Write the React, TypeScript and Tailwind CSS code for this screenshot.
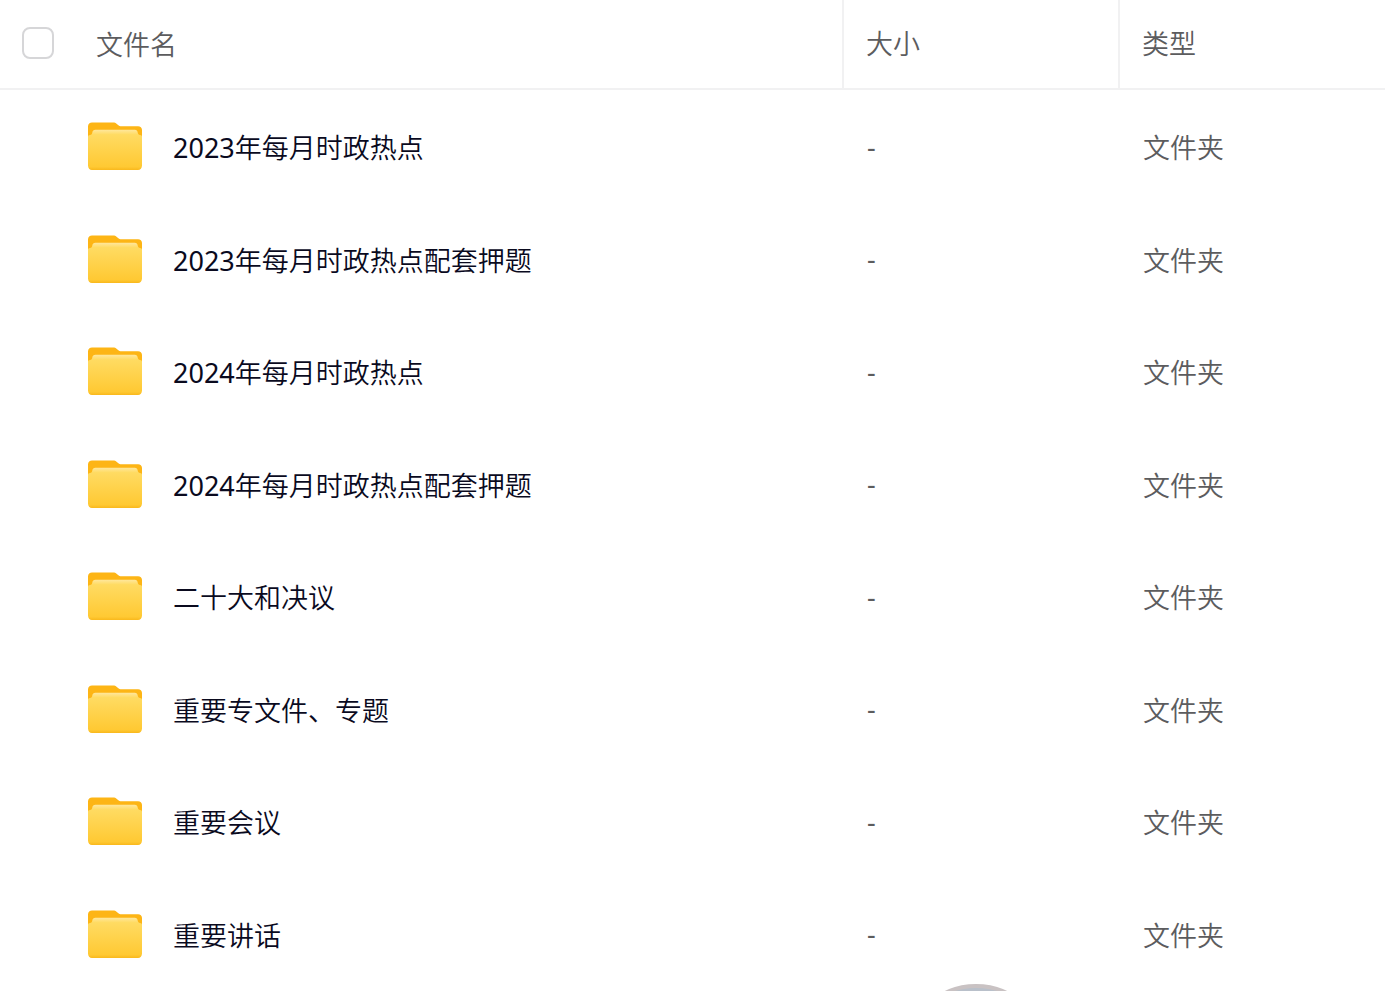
const files = [
  '2023年每月时政热点',
  '2023年每月时政热点配套押题',
  '2024年每月时政热点',
  '2024年每月时政热点配套押题',
  '二十大和决议',
  '重要专文件、专题',
  '重要会议',
  '重要讲话',
];

function FolderGradients() {
  return (
    <svg className="absolute size-0" aria-hidden="true">
      <defs>
        <linearGradient id="folder-front" x1="0" y1="0" x2="0" y2="1">
          <stop offset="0" stopColor="#FFE79C" />
          <stop offset="0.12" stopColor="#FFDB62" />
          <stop offset="0.92" stopColor="#FFC933" />
          <stop offset="1" stopColor="#F9B81C" />
        </linearGradient>
      </defs>
    </svg>
  );
}

function FolderIcon() {
  return (
    <svg className="shrink-0" width="54" height="49" viewBox="0 0 54 49" fill="none" aria-hidden="true">
      <path
        d="M0 4.5C0 2 1.8 0.5 4 0.5H25C26.6 0.5 27.7 1 28.8 1.9L30.4 3.2C31.3 3.9 32 4.2 33.2 4.2H50C52.4 4.2 54 5.8 54 8V30H0Z"
        fill="#FDB515"
      />
      <path
        d="M0 15C0 13.4 0.8 13.2 2 13C3.6 12.7 4 12 4.3 10.4C4.6 8.6 5.6 7.8 7.4 7.8H46.8C48.6 7.8 49.4 8.7 49.7 10.4C50 12 50.6 12.7 52 13C53.2 13.2 54 13.4 54 15V43.5C54 46.1 52.4 48 50 48H4C1.6 48 0 46.1 0 43.5Z"
        fill="url(#folder-front)"
      />
    </svg>
  );
}

// the year prefix takes the regular Latin weight, the Chinese part stays lighter
function FileName({ name }: { name: string }) {
  const year = name.match(/^\d+/)?.[0] ?? '';

  return (
    <a href="#" className="pt-[3px] text-[#0a0a1e]">
      {year && <span className="font-normal">{year}</span>}
      {name.slice(year.length)}
    </a>
  );
}

export default function App() {
  return (
    <div className="w-full bg-white font-['Noto_Sans','Noto_Sans_CJK_SC',sans-serif] text-[27px] leading-9 font-[350] text-[#5c5c5e]">
      <FolderGradients />
      <table className="w-full table-fixed border-separate border-spacing-0 text-left">
        <thead>
          <tr className="h-[90px]">
            <th className="border-b-2 border-[#f1f1f2] p-0 pb-0.5 font-[350]">
              <div className="flex items-center gap-[42px] pl-[22px]">
                <input
                  type="checkbox"
                  aria-label="文件名"
                  className="size-8 shrink-0 appearance-none rounded-lg border-2 border-[#d6d6d8] bg-white checked:bg-[#FDB515]"
                />
                <span className="pt-1">文件名</span>
              </div>
            </th>
            <th className="w-[276px] border-b-2 border-[#f1f1f2] p-0 font-[350]">
              <div className="flex h-[88px] items-center border-l-2 border-[#f1f1f2] pl-[22px]">大小</div>
            </th>
            <th className="w-[267px] border-b-2 border-[#f1f1f2] p-0 font-[350]">
              <div className="flex h-[88px] items-center border-l-2 border-[#f1f1f2] pl-[22px]">类型</div>
            </th>
          </tr>
        </thead>
        <tbody>
          {files.map((name) => (
            <tr key={name} className="odd:h-[113px] even:h-[112px]">
              <td className="p-0 pl-[88px]">
                <div className="flex items-center gap-[31px]">
                  <FolderIcon />
                  <FileName name={name} />
                </div>
              </td>
              <td className="p-0 pl-[25px] font-normal">-</td>
              <td className="p-0 pt-[3px] pl-[25px]">文件夹</td>
            </tr>
          ))}
        </tbody>
      </table>

      {/* floating avatar, mostly below the fold */}
      <div className="fixed right-[337px] -bottom-[137px] size-36 rounded-full border-4 border-[#c9c2c3] bg-[#b9c0ca]" />
    </div>
  );
}
